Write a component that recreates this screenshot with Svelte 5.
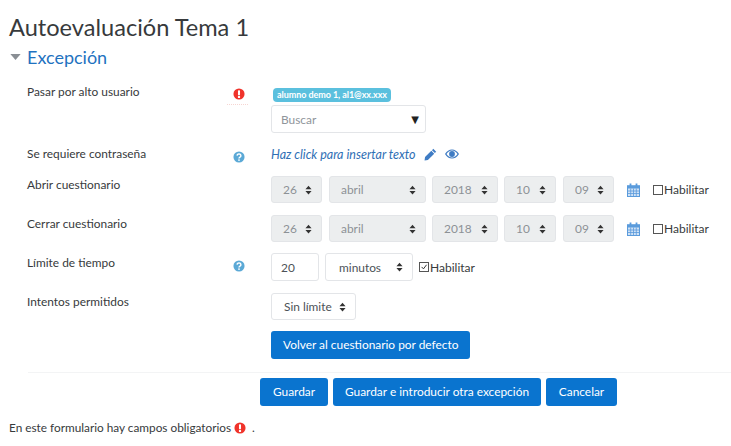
<script lang="ts">
  const dateRows = [
    { label: 'Abrir cuestionario' },
    { label: 'Cerrar cuestionario' },
  ];
</script>

{#snippet alert(cls)}
  <svg class={cls} viewBox="0 0 14 14" aria-hidden="true">
    <circle cx="7" cy="7" r="6.5" fill="#f0332b" />
    <rect x="5.8" y="2.6" width="2.4" height="5.8" rx="0.8" fill="#fff" />
    <circle cx="7" cy="10.4" r="1.4" fill="#fff" />
  </svg>
{/snippet}

{#snippet help()}
  <svg class="icon" viewBox="0 0 14 14" aria-hidden="true">
    <circle cx="7" cy="7" r="6.5" fill="#5ba9d6" />
    <path d="M4.8 5.4a2.2 2 0 1 1 3.3 1.8c-.8.5-1.1.8-1.1 1.5" fill="none" stroke="#fff" stroke-width="1.7" />
    <circle cx="7" cy="10.6" r="1.05" fill="#fff" />
  </svg>
{/snippet}

{#snippet updown()}
  <svg class="updown" viewBox="0 0 8 11" aria-hidden="true">
    <path d="M4 0.5 7.5 4.5H.5Z M4 10.5 .5 6.5H7.5Z" fill="#333" />
  </svg>
{/snippet}

{#snippet select(value, cls)}
  <div class="select {cls}">
    <span>{value}</span>
    {@render updown()}
  </div>
{/snippet}

<main class="page">
  <h1>Autoevaluación Tema 1</h1>

  <h2>
    <svg class="caret" viewBox="0 0 12 7" aria-hidden="true"><path d="M0 0H12L6 7Z" fill="#8a8f94" /></svg>
    Excepción
  </h2>

  <section class="form">
    <div class="row row-user">
      <div class="label">Pasar por alto usuario</div>
      <div class="mark"><span class="required">{@render alert('icon')}</span></div>
      <div class="field stack">
        <span class="chip">alumno demo 1, al1@xx.xxx</span>
        <div class="search">
          <span>Buscar</span>
          <span class="search-arrow">▼</span>
        </div>
      </div>
    </div>

    <div class="row row-pass">
      <div class="label">Se requiere contraseña</div>
      <div class="mark">{@render help()}</div>
      <div class="field inline">
        <em class="link">Haz click para insertar texto</em>
        <svg class="pencil" viewBox="0 0 14 14" aria-hidden="true">
          <path d="M10 .9 13.1 4 11.7 5.4 8.6 2.3Z M7.9 3 11 6.1 4.2 12.9.6 13.4 1.1 9.8Z" fill="#3f7cc4" />
        </svg>
        <svg class="eye" viewBox="0 0 14 10" aria-hidden="true">
          <path fill-rule="evenodd" d="M0 5C1.8 2 4.2.5 7 .5S12.200 2 14 5C12.200 8 9.800 9.500 7 9.500S1.800 8 0 5ZM1.500 5C3 7.200 4.800 8.400 7 8.400S11 7.200 12.500 5C11 2.800 9.200 1.600 7 1.600S3 2.800 1.500 5Z" fill="#3f7cc4" />
          <circle cx="7" cy="5" r="2.900" fill="#3f7cc4" />
        </svg>
      </div>
    </div>

    {#each dateRows as row}
      <div class="row row-date">
        <div class="label">{row.label}</div>
        <div class="mark"></div>
        <div class="field inline dates">
          {@render select('26', 'off w-day')}
          {@render select('abril', 'off w-month')}
          {@render select('2018', 'off w-year')}
          {@render select('10', 'off w-hour')}
          {@render select('09', 'off w-min')}
          <svg class="calendar" viewBox="0 0 13 14" aria-hidden="true">
            <path d="M0 2.200H13V14H0Z" fill="#5a9bdc" />
            <path d="M1 5.500H12V13H1Z" fill="#cfe2f6" />
            <path d="M3.700 5.500V13M6.500 5.500V13M9.300 5.500V13M1 8H12M1 10.500H12" stroke="#5a9bdc" stroke-width="0.8" />
            <rect x="2.600" y="0.500" width="1.800" height="3" fill="#5a9bdc" />
            <rect x="8.600" y="0.500" width="1.800" height="3" fill="#5a9bdc" />
          </svg>
          <span class="check">
            <span class="box"></span>Habilitar
          </span>
        </div>
      </div>
    {/each}

    <div class="row row-limit">
      <div class="label">Límite de tiempo</div>
      <div class="mark">{@render help()}</div>
      <div class="field inline limit">
        <div class="number">20</div>
        {@render select('minutos', 'w-unit')}
        <span class="check">
          <span class="box">
            <svg viewBox="0 0 9 9" aria-hidden="true"><path d="M1.800 4.400 3.900 6.600 7.400 2" fill="none" stroke="#333" stroke-width="1.100" /></svg>
          </span>Habilitar
        </span>
      </div>
    </div>

    <div class="row row-attempts">
      <div class="label">Intentos permitidos</div>
      <div class="mark"></div>
      <div class="field">
        {@render select('Sin límite', 'w-attempts')}
      </div>
    </div>

    <div class="row row-reset">
      <div class="label"></div>
      <div class="mark"></div>
      <div class="field">
        <button type="button" class="btn">Volver al cuestionario por defecto</button>
      </div>
    </div>
  </section>

  <hr />

  <div class="actions">
    <button type="button" class="btn save">Guardar</button>
    <button type="button" class="btn save-next">Guardar e introducir otra excepción</button>
    <button type="button" class="btn cancel">Cancelar</button>
  </div>

  <p class="note">
    En este formulario hay campos obligatorios
    {@render alert('icon note-icon')}
    <span class="dot">.</span>
  </p>
</main>

<style>
  :global(body) {
    background: #fff;
  }

  .page {
    width: 731px;
    height: 446px;
    box-sizing: border-box;
    overflow: hidden;
    padding-top: 12px;
    font-family: Lato, "Open Sans", sans-serif;
    font-size: 11.9px;
    color: #373a3c;
  }

  h1 {
    margin: 0 0 0 9px;
    font-size: 23.600px;
    line-height: 30px;
    font-weight: 400;
    color: #373a3c;
  }

  h2 {
    display: flex;
    align-items: center;
    gap: 6px;
    margin: 3px 0 0 10px;
    font-size: 18px;
    line-height: 24px;
    font-weight: 400;
    color: #1f72c0;
  }

  .caret {
    width: 11px;
    height: 6px;
  }

  .form {
    margin-top: 13px;
  }

  .row {
    display: grid;
    grid-template-columns: 27px 205px 39px 1fr;
    align-items: start;
  }

  .label {
    grid-column: 2;
    line-height: 18px;
  }

  .mark {
    grid-column: 3;
    line-height: 0;
  }

  .field {
    grid-column: 4;
  }

  .row-user {
    height: 63px;
  }

  .row-user .label {
    margin-top: 1px;
  }

  .row-pass {
    height: 31px;
  }

  .row-date {
    height: 39px;
  }

  .row-limit {
    height: 39px;
  }

  .row-attempts {
    height: 38px;
  }

  .row-reset {
    height: 41px;
  }

  .row-pass .field {
    height: 18px;
  }

  .icon {
    display: block;
    width: 12px;
    height: 12px;
    margin: 6px 0 0 1px;
  }

  .required {
    display: block;
    width: 21px;
    height: 16px;
    margin-left: -5px;
    border-bottom: 1px dotted #f6d5d2;
  }

  .required :global(.icon) {
    margin-left: 6px;
  }

  .stack {
    display: flex;
    flex-direction: column;
    align-items: flex-start;
  }

  .chip {
    margin: 6px 0 3px 2px;
    padding: 0 4px;
    height: 14px;
    border-radius: 4px;
    background: #5bc0de;
    color: #fff;
    font-size: 9px;
    font-weight: 700;
    line-height: 14px;
    letter-spacing: -0.06px;
  }

  .search {
    display: flex;
    align-items: center;
    justify-content: space-between;
    box-sizing: border-box;
    width: 155px;
    height: 28px;
    padding: 0 6px 0 9px;
    border: 1px solid #e3e5e8;
    border-radius: 3px;
    color: #8f959b;
  }

  .search-arrow {
    color: #222;
    font-family: "DejaVu Sans", sans-serif;
    font-size: 10px;
  }

  .inline {
    display: flex;
    align-items: center;
  }

  .link {
    color: #2f6fb5;
    font-size: 12.500px;
  }

  .pencil {
    width: 13px;
    height: 13px;
    margin-left: 8px;
  }

  .eye {
    width: 14px;
    height: 10px;
    margin-left: 8px;
  }

  .select {
    display: flex;
    align-items: center;
    justify-content: space-between;
    box-sizing: border-box;
    height: 27px;
    padding: 0 9px 0 11px;
    border: 1px solid #e3e5e8;
    border-radius: 3px;
    background: #fff;
    color: #4d5257;
  }

  .select.off {
    background: #eceeef;
    color: #8c9196;
  }

  .updown {
    width: 7px;
    height: 10px;
  }

  .w-day {
    width: 51px;
    margin-right: 7px;
  }

  .w-month {
    width: 97px;
    margin-right: 6px;
  }

  .w-year {
    width: 66px;
    margin-right: 6px;
  }

  .w-hour {
    width: 52px;
    margin-right: 7px;
  }

  .w-min {
    width: 51px;
  }

  .calendar {
    width: 13px;
    height: 14px;
    margin: 0 13px 0 13px;
  }

  .check {
    display: flex;
    align-items: center;
    font-size: 12px;
    color: #373a3c;
  }

  .box {
    display: block;
    box-sizing: border-box;
    width: 10px;
    height: 10px;
    margin-right: 1px;
    border: 1px solid #555;
    line-height: 0;
  }

  .box svg {
    display: block;
    width: 8px;
    height: 8px;
  }

  .limit {
    height: 28px;
    margin-top: -1px;
  }

  .number {
    display: flex;
    align-items: center;
    box-sizing: border-box;
    width: 48px;
    height: 28px;
    margin-right: 6px;
    padding-left: 9px;
    border: 1px solid #e3e5e8;
    border-radius: 3px;
    color: #4d5257;
  }

  .w-unit {
    width: 88px;
    height: 28px;
    margin-right: 6px;
    padding-left: 13px;
  }

  .w-attempts {
    width: 85px;
    padding-left: 12px;
  }

  .btn {
    box-sizing: border-box;
    height: 28px;
    padding: 0 12px;
    border: 0;
    border-radius: 3px;
    background: #0a74cf;
    color: #fff;
    font-family: inherit;
    font-size: 11.900px;
    line-height: 28px;
  }

  .save {
    width: 68px;
    padding: 0;
  }

  .save-next {
    width: 208px;
    padding: 0;
  }

  .cancel {
    width: 71px;
    padding: 0;
  }

  hr {
    margin: 0 0 0 28px;
    border: 0;
    border-top: 1px solid #f3f4f5;
  }

  .actions {
    display: flex;
    gap: 5px;
    margin: 5px 0 0 260px;
  }

  .note {
    display: flex;
    align-items: center;
    margin: 13px 0 0 9px;
    font-size: 11.800px;
    line-height: 18px;
  }

  .note :global(.note-icon) {
    margin: 0 0 0 3px;
  }

  .dot {
    margin-left: 6px;
  }
</style>
